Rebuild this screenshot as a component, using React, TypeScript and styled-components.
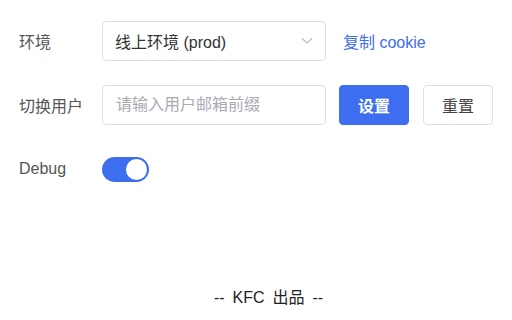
import React, { useState } from "react";
import styled, { createGlobalStyle } from "styled-components";

const Global = createGlobalStyle`
  html, body { margin: 0; padding: 0; background: #fff; }
  body { font-family: "Helvetica Neue", "Liberation Sans", "Noto Sans CJK SC", sans-serif; }
  * { box-sizing: border-box; }
`;

const Page = styled.div`
  width: 512px;
  height: 320px;
  display: flex;
  flex-direction: column;
  padding: 21px 19px 0 19px;
`;

const Form = styled.div`
  display: flex;
  flex-direction: column;
  gap: 24px;
`;

const Row = styled.div`
  display: flex;
  align-items: center;
  height: 40px;
`;

const Label = styled.div`
  width: 83px;
  font-size: 16px;
  color: #555;
  flex-shrink: 0;
`;

const Box = styled.div`
  width: 224px;
  height: 40px;
  border: 1px solid #dcdfe6;
  border-radius: 4px;
  display: flex;
  align-items: center;
  padding: 0 12px;
  font-size: 16px;
  color: #333;
`;

const SelectText = styled.span`
  flex: 1;
`;

const Input = styled.input`
  width: 224px;
  height: 40px;
  border: 1px solid #dcdfe6;
  border-radius: 4px;
  padding: 0 13px;
  font-size: 16px;
  font-family: inherit;
  color: #333;
  outline: none;
  &::placeholder { color: #a8abb2; }
`;

const Link = styled.a`
  margin-left: 17px;
  font-size: 16px;
  color: #3d6ef0;
  cursor: pointer;
`;

const Button = styled.button<{ $primary?: boolean }>`
  width: 70px;
  height: 40px;
  border-radius: 4px;
  font-size: 16px;
  font-family: inherit;
  font-weight: ${(p) => (p.$primary ? 600 : 400)};
  border: 1px solid ${(p) => (p.$primary ? "#3d6ef0" : "#dcdfe6")};
  background: ${(p) => (p.$primary ? "#3d6ef0" : "#fff")};
  color: ${(p) => (p.$primary ? "#fff" : "#444")};
  margin-left: ${(p) => (p.$primary ? "13px" : "14px")};
  cursor: pointer;
`;

const Switch = styled.button<{ $on: boolean }>`
  width: 47px;
  height: 25px;
  border-radius: 13px;
  border: none;
  padding: 2px;
  background: ${(p) => (p.$on ? "#3d6ef0" : "#dcdfe6")};
  display: flex;
  justify-content: ${(p) => (p.$on ? "flex-end" : "flex-start")};
  align-items: center;
  cursor: pointer;
`;

const Knob = styled.span`
  width: 21px;
  height: 21px;
  border-radius: 50%;
  background: #fff;
`;

const Footer = styled.div`
  margin-top: auto;
  margin-bottom: 12px;
  text-align: center;
  font-size: 16px;
  color: #222;
  word-spacing: 3.5px;
  padding-left: 25px;
`;

export default function App() {
  const [on, setOn] = useState(true);
  return (
    <>
      <Global />
      <Page>
        <Form>
          <Row>
            <Label>环境</Label>
            <Box>
              <SelectText>线上环境 (prod)</SelectText>
              <svg width="12" height="8" viewBox="0 0 12 8">
                <path d="M1 1.5 L6 6 L11 1.5" fill="none" stroke="#bbb" strokeWidth="1.2" />
              </svg>
            </Box>
            <Link>复制 cookie</Link>
          </Row>
          <Row>
            <Label>切换用户</Label>
            <Input placeholder="请输入用户邮箱前缀" />
            <Button $primary>设置</Button>
            <Button>重置</Button>
          </Row>
          <Row>
            <Label>Debug</Label>
            <Switch $on={on} onClick={() => setOn(!on)}>
              <Knob />
            </Switch>
          </Row>
        </Form>
        <Footer>-- KFC 出品 --</Footer>
      </Page>
    </>
  );
}
